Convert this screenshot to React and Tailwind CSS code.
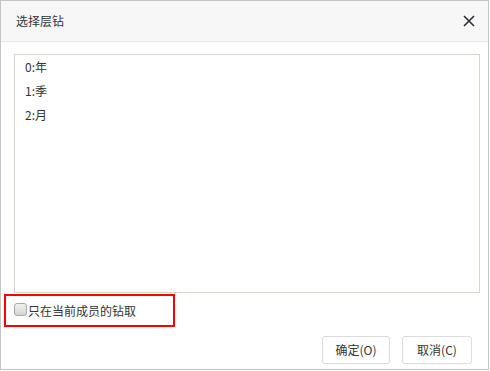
import React from 'react';

const levels = ['0:年', '1:季', '2:月'];

const App = () => {
  return (
    <div
      className="w-[489px] h-[370px] border border-[#c4c4c4] bg-white flex flex-col text-[12px] text-[#333]"
      style={{ fontFamily: '"Microsoft YaHei", "Noto Sans CJK SC", "Liberation Sans", sans-serif' }}
    >
      {/* Header */}
      <div className="h-[41px] shrink-0 bg-[#f7f7f7] border-b border-[#e6e6e6] flex items-center justify-between pl-[15px] pr-[12px]">
        <span className="text-[12px] text-[#333]">选择层钻</span>
        <svg width="12" height="12" viewBox="0 0 12 12" className="mr-[1px]">
          <path d="M1 1L11 11M11 1L1 11" stroke="#2b2b3a" strokeWidth="1.6" />
        </svg>
      </div>

      {/* Level list */}
      <div className="ml-[13px] mt-[12px] w-[466px] h-[239px] shrink-0 border border-[#d6d6cf] pl-[10px]">
        {levels.map((l) => (
          <div key={l} className="h-[24px] leading-[24px]">{l}</div>
        ))}
      </div>

      {/* Only current member */}
      <div className="ml-[3px] mt-[1px] w-[171px] h-[33px] shrink-0 border-2 border-[#ff0000] flex items-center pl-[8px]">
        <span className="w-[13px] h-[13px] rounded-[3px] border border-[#a8a8a8] bg-gradient-to-b from-[#f0f0f0] to-[#d4d4d4] mb-[3px]" />
        <span className="ml-[1px] mt-[1px]">只在当前成员的钻取</span>
      </div>

      {/* Footer buttons */}
      <div className="flex justify-end gap-[12px] mt-[9px] pr-[16px]">
        <button className="w-[68px] h-[28px] border border-[#dcdcdc] rounded-[3px] bg-white text-[12px] text-[#333]">确定(O)</button>
        <button className="w-[70px] h-[28px] border border-[#dcdcdc] rounded-[3px] bg-white text-[12px] text-[#333]">取消(C)</button>
      </div>
    </div>
  );
};

export default App;
